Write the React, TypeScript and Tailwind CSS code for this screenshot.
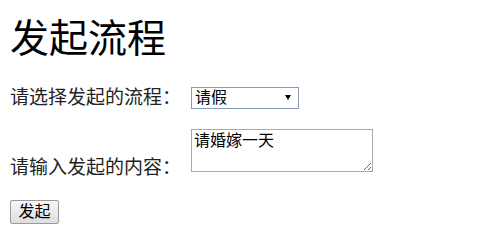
import React from 'react';

const cjk = "font-['Liberation_Sans','Noto_Sans_CJK_SC',sans-serif]";

const App: React.FC = () => {
    return (
        <div className={`min-h-[252px] w-[488px] bg-white px-[10px] pt-[19px] text-[#222] ${cjk}`}>
            <h1 className="m-0 text-[39px] leading-[39px] font-normal text-black">发起流程</h1>

            <div className="mt-[28px] flex items-center">
                <label className="w-[181px] text-[19px] leading-[19px]">请选择发起的流程：</label>
                <div className="relative h-[22px] w-[108px]">
                    <select
                        defaultValue="leave"
                        className="h-full w-full appearance-none rounded-none border border-[#7f9db9] bg-white pl-[3px] text-[16px] leading-[20px] text-black outline-none"
                    >
                        <option value="leave">请假</option>
                        <option value="trip">出差</option>
                    </select>
                    {/* dropdown arrow */}
                    <svg className="pointer-events-none absolute right-[8px] top-[9px]" width="6" height="5" viewBox="0 0 6 5">
                        <path d="M0 0h6L3 5z" fill="#000" />
                    </svg>
                </div>
            </div>

            <div className="mt-[21px] flex items-end">
                <label className="mb-[-1px] w-[181px] text-[19px] leading-[19px]">请输入发起的内容：</label>
                <textarea
                    defaultValue="请婚嫁一天"
                    className="mb-[4px] h-[43px] w-[182px] rounded-none border border-[#a9a9a9] bg-white px-[2px] pt-[1px] text-[16px] leading-[20px] text-black outline-none"
                />
            </div>

            <button className="mt-[24px] h-[24px] w-[49px] rounded-[2px] border border-[#9a9a9a] bg-gradient-to-b from-[#f6f6f6] to-[#dedede] text-[16px] leading-[20px] text-black">
                发起
            </button>
        </div>
    );
};

export default App;
